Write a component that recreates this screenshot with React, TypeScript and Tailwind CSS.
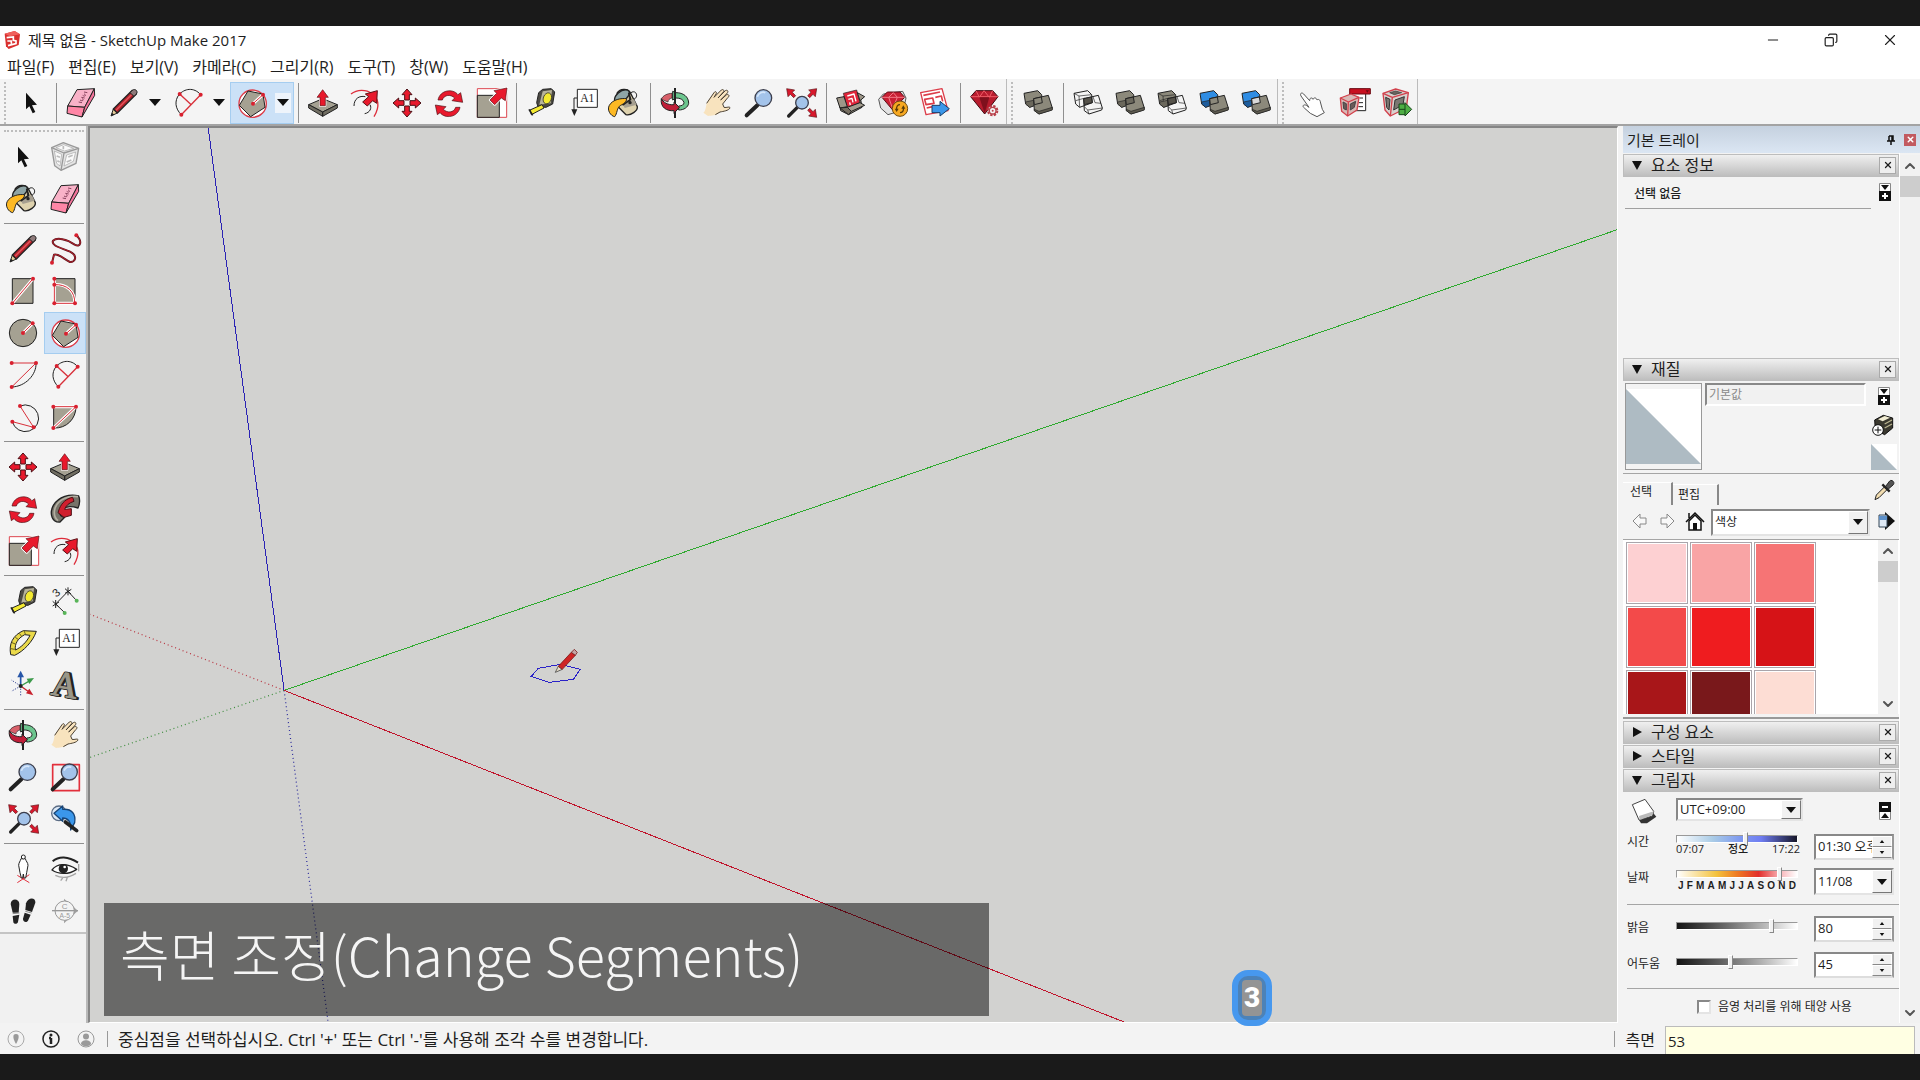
import type { ReactNode } from 'react'
import { ChevronDown, ChevronUp, Copy, Minus, X } from 'lucide-react'

const RED = '#e8192c'
const CLAY = '#a5a192'
const STONE = '#8c897b'
const BLUE = '#2f8de4'
const INK = '#222222'

function Icon({ children }: { children: ReactNode }) {
  return (
    <svg viewBox="0 0 90 90" className="size-[30px] overflow-visible" fill="none" strokeLinejoin="round" aria-hidden="true">
      {children}
    </svg>
  )
}

function Dots({ at }: { at: number[][] }) {
  return (
    <>
      {at.map(([x, y]) => (
        <circle key={`${x}-${y}`} cx={x} cy={y} r="6" fill="#d8202f" />
      ))}
    </>
  )
}

// Red stroke with a white halo
function Halo({ d }: { d: string }) {
  return (
    <>
      <path d={d} stroke="#fff" strokeWidth="9" />
      <path d={d} stroke="#d8303a" strokeWidth="3" />
    </>
  )
}

function SelectIcon() {
  return (
    <Icon>
      <path d="M30 14V64L40 55L50 76L58 72L48 52L63 50Z" fill="#111" />
    </Icon>
  )
}

function ComponentIcon() {
  return (
    <Icon>
      <path d="M5 17L40 2L86 19L78 64L33 85L14 71Z" fill="#e4e4e4" stroke="#999" strokeWidth="4" />
      <path d="M5 17L42 33L86 19M42 33L33 85" stroke="#999" strokeWidth="4" />
      <path d="M13 27L35 37L30 72L20 64ZM50 39L77 30L70 58L42 72ZM18 17L41 8L71 19L43 27Z" fill="#fafafa" stroke="#a5a5a5" strokeWidth="2" />
      <path d="M55 45L68 40M50 60L64 54M20 42L30 46M22 56L29 60M40 12V22" stroke="#bbb" strokeWidth="5" />
    </Icon>
  )
}

function PaintIcon() {
  return (
    <Icon>
      <path d="M22 14C30 2 52 0 60 12L82 56C84 68 62 84 48 80L14 46Z" fill="#ded2ae" stroke={INK} strokeWidth="4" />
      <path d="M34 40L72 34L80 50L44 60Z" fill="#a69f90" />
      <path d="M14 40C10 22 34 2 52 6C66 12 54 32 38 38C30 42 18 46 14 40Z" fill="#8fa5a6" stroke={INK} strokeWidth="4" />
      <path d="M56 14L62 34L40 50L30 44" stroke={INK} strokeWidth="5" />
      <path d="M50 32C34 30 8 34 -2 52C-10 66 2 84 14 86C22 78 20 58 32 52C40 48 50 42 50 32Z" fill="#fdb924" stroke={INK} strokeWidth="3" />
      <path d="M60 42C54 22 62 8 74 12C84 18 80 30 72 34" stroke={INK} strokeWidth="3" />
      <circle cx="60" cy="44" r="5" fill={INK} />
    </Icon>
  )
}

function EraserIcon() {
  return (
    <Icon>
      <path d="M33 5L85 2L56 58L5 54Z" fill="#f9b2c8" stroke={INK} strokeWidth="3" />
      <path d="M5 54L56 58L48 87L3 76Z" fill="#ff86a6" stroke={INK} strokeWidth="3" />
      <path d="M85 2L86 22L48 87L56 58Z" fill="#f4749b" stroke={INK} strokeWidth="3" />
      <path d="M38 42L48 44M42 36C50 42 56 34 48 32M46 28L56 30M50 22C58 28 62 20 54 18M54 12L64 14" stroke="#8b4560" strokeWidth="3" />
    </Icon>
  )
}

function PencilIcon() {
  return (
    <Icon>
      <path d="M6 84L13 63L25 75Z" fill="#e6cf9b" stroke={INK} strokeWidth="3" />
      <path d="M6 84L9 74L16 80Z" fill={INK} />
      <path d="M13 63L70 7L82 18L25 75Z" fill="#b3202a" stroke={INK} strokeWidth="4" />
      <path d="M21 67L72 16" stroke="#e4565c" strokeWidth="4" />
      <path d="M63 14L70 7C78 0 89 10 82 18L75 25Z" fill="#8e7a7a" stroke={INK} strokeWidth="3" />
    </Icon>
  )
}

function FreehandIcon() {
  const d = 'M79 4C98 22 92 42 74 32C50 14 20 10 9 20C2 36 36 42 60 53C86 66 74 86 60 84C40 74 26 58 12 62L6 86'
  return (
    <Icon>
      <path d={d} stroke="#5e161d" strokeWidth="6" />
      <path d={d} stroke="#b3222e" strokeWidth="3" />
      <Dots at={[[79, 4], [6, 86]]} />
    </Icon>
  )
}

function RectangleIcon() {
  return (
    <Icon>
      <path d="M13 8H75V82H13Z" fill={CLAY} stroke={INK} strokeWidth="3" />
      <Halo d="M13 82L75 8" />
      <Dots at={[[13, 82], [75, 8]]} />
    </Icon>
  )
}

function RotatedRectangleIcon() {
  return (
    <Icon>
      <path d="M13 8H75V82H13Z" fill={CLAY} stroke={INK} strokeWidth="3" />
      <Halo d="M13 8V82H75" />
      <Halo d="M13 26C50 24 76 46 74 82" />
      <Dots at={[[13, 8], [13, 26], [13, 82], [75, 82]]} />
    </Icon>
  )
}

function CircleIcon() {
  return (
    <Icon>
      <circle cx="45" cy="45" r="41" fill={CLAY} stroke={INK} strokeWidth="3" />
      <Halo d="M45 45L74 16" />
      <Dots at={[[45, 45], [74, 16]]} />
    </Icon>
  )
}

function PolygonIcon() {
  return (
    <Icon>
      <circle cx="47" cy="47" r="41" fill="#fff" stroke="#dd3c48" strokeWidth="4" />
      <path d="M33 9L78 18L84 58L41 86L7 52Z" fill={CLAY} stroke={INK} strokeWidth="3" />
      <Halo d="M48 47L78 20" />
      <Dots at={[[48, 47], [78, 20]]} />
    </Icon>
  )
}

function ArcIcon() {
  return (
    <Icon>
      <path d="M84 9C86 44 52 80 11 81" stroke={INK} strokeWidth="3" />
      <path d="M11 9H84L11 81" stroke="#d8303a" strokeWidth="3" />
      <Dots at={[[11, 9], [84, 9], [11, 81]]} />
    </Icon>
  )
}

function TwoPointArcIcon() {
  return (
    <Icon>
      <path d="M83 20C62 -4 34 2 18 20C4 38 6 62 25 80" stroke={INK} strokeWidth="3" />
      <path d="M20 18L53 49M83 20L25 80" stroke="#d8303a" strokeWidth="4" />
      <Dots at={[[20, 18], [83, 20], [25, 80]]} />
    </Icon>
  )
}

function ThreePointArcIcon() {
  return (
    <Icon>
      <path d="M36 12A40 40 0 1 1 13 59" stroke={INK} strokeWidth="3" />
      <path d="M36 12L77 76L13 59" stroke="#d8303a" strokeWidth="3" />
      <Dots at={[[36, 12], [77, 76], [13, 59]]} />
    </Icon>
  )
}

function PieIcon() {
  return (
    <Icon>
      <path d="M11 14H78C78 50 50 80 11 78Z" fill={CLAY} stroke={INK} strokeWidth="3" />
      <Halo d="M10 14H78L10 78" />
      <Dots at={[[10, 14], [78, 14], [10, 78]]} />
    </Icon>
  )
}

function MoveIcon() {
  return (
    <Icon>
      {['rotate(0 45 45)', 'rotate(90 45 45)', 'rotate(180 45 45)', 'rotate(270 45 45)'].map((turn) => (
        <path key={turn} transform={turn} d="M45 3L60 20H52V36H38V20H30Z" fill={RED} stroke="#4a1015" strokeWidth="3" />
      ))}
    </Icon>
  )
}

function PushPullIcon() {
  return (
    <Icon>
      <path d="M2 50L44 32L88 50L44 72Z" fill={CLAY} stroke={INK} strokeWidth="3" />
      <path d="M2 50V60L44 85V72ZM88 50V60L44 85V72Z" fill="#716e62" stroke={INK} strokeWidth="3" />
      <path d="M44 5L61 28H52V53H36V28H27Z" fill={RED} stroke="#fff" strokeWidth="6" paintOrder="stroke" />
      <path d="M44 5L61 28H52V53H36V28H27Z" stroke="#5a1015" strokeWidth="2" />
    </Icon>
  )
}

function RotateIcon() {
  const d = 'M12 36C18 6 56 0 72 20L80 14L86 43L54 38L62 30C50 18 30 20 25 36Z'
  return (
    <Icon>
      <path d={d} fill={RED} stroke="#4a1015" strokeWidth="2" />
      <path d={d} transform="rotate(180 45 47)" fill={RED} stroke="#4a1015" strokeWidth="2" />
    </Icon>
  )
}

function FollowMeIcon() {
  return (
    <Icon>
      <path d="M86 6C60 -2 26 8 10 34C-4 62 8 86 30 84L44 70C28 68 26 54 36 46C50 34 66 36 84 42C90 30 90 14 86 6Z" fill="#77746a" stroke={INK} strokeWidth="4" />
      <path d="M84 8C56 4 26 16 16 40C10 58 14 72 24 80" stroke="#b3afa2" strokeWidth="5" />
      <path d="M28 44C36 26 48 14 68 10L72 22C58 26 48 34 44 46L64 44V64L42 70L24 56Z" fill="#d01f2e" stroke="#4a1015" strokeWidth="3" />
    </Icon>
  )
}

function ScaleIcon() {
  return (
    <Icon>
      <path d="M4 2H92V88H4Z" fill="#fff" stroke="#dd4650" strokeWidth="3" />
      <path d="M4 22H70V88H4Z" fill={CLAY} stroke={INK} strokeWidth="3" />
      <path d="M93 0L88 38L76 30L56 50L42 36L62 16L54 8Z" fill={RED} stroke="#fff" strokeWidth="7" paintOrder="stroke" />
      <path d="M93 0L88 38L76 30L56 50L42 36L62 16L54 8Z" stroke="#5a1015" strokeWidth="2" />
    </Icon>
  )
}

function OffsetIcon() {
  return (
    <Icon>
      <path d="M3 18C40 -12 112 22 72 86" stroke="#dd2c3a" strokeWidth="4" />
      <path d="M12 54C12 32 28 22 46 26M44 77C60 74 66 60 60 50" stroke={INK} strokeWidth="3" />
      <path d="M82 8L80 46L68 38L52 54L38 42L56 26L46 18Z" fill={RED} stroke="#5a1015" strokeWidth="3" />
    </Icon>
  )
}

function TapeIcon() {
  return (
    <Icon>
      <path d="M50 4L76 2L86 12L80 48L60 58L36 56L32 44L38 14Z" fill="#4c4a44" stroke={INK} strokeWidth="3" />
      <path d="M50 10L78 6L74 46L40 50Z" fill="#b8b49c" />
      <ellipse cx="64" cy="31" rx="12" ry="17" transform="rotate(20 64 31)" fill="#f4ea31" stroke={INK} strokeWidth="2" />
      <path d="M12 66L48 50L54 60L16 80Z" fill="#f4ea31" stroke={INK} strokeWidth="3" />
      <path d="M9 64L20 82" stroke={INK} strokeWidth="5" />
    </Icon>
  )
}

function DimensionIcon() {
  return (
    <Icon>
      <path d="M17 54L54 16L80 44M17 54L44 80M8 46L26 62M17 42V66M8 60L27 48M45 8L63 24M54 4V28M45 22L64 10" stroke={INK} strokeWidth="3" />
      <circle cx="44" cy="81" r="6" fill="#58b558" />
      <circle cx="80" cy="44" r="6" fill="#58b558" />
      <text x="8" y="30" fontSize="34" fontFamily="Liberation Sans" fill={INK} transform="rotate(-40 20 18)">3</text>
    </Icon>
  )
}

function ProtractorIcon() {
  return (
    <Icon>
      <path d="M85 10L46 8C14 22 2 48 8 80L20 82C46 70 74 42 85 10Z" fill="#ead94a" stroke={INK} strokeWidth="3" />
      <path d="M66 22L50 20C28 32 20 48 22 66C40 58 56 42 66 22Z" fill="#f4f4f4" stroke={INK} strokeWidth="3" />
      <path d="M48 8L52 18M34 16L40 24M22 28L30 34M12 44L22 48M8 62L20 64" stroke="#6c621c" strokeWidth="3" />
    </Icon>
  )
}

function TextIcon() {
  return (
    <Icon>
      <path d="M28 30H18V68" stroke={INK} strokeWidth="3" />
      <path d="M10 64H28L19 84Z" fill={INK} />
      <path d="M28 4H88V58H28Z" fill="#fff" stroke={INK} strokeWidth="3" />
      <text x="58" y="42" textAnchor="middle" fontSize="35" fontFamily="Liberation Serif" fill={INK}>A1</text>
    </Icon>
  )
}

function AxesIcon() {
  return (
    <Icon>
      <path d="M38 48V80M38 48L10 64M38 48L10 30" stroke="#44539d" strokeWidth="3" strokeDasharray="4 4" />
      <path d="M38 48V18" stroke="#2756a8" strokeWidth="5" />
      <path d="M28 22L38 2L48 22Z" fill="#2756a8" />
      <path d="M38 48L62 34" stroke="#3c9a4a" strokeWidth="4" />
      <path d="M56 26L78 24L64 42Z" fill="#3c9a4a" />
      <path d="M38 48L60 64" stroke="#c8202c" strokeWidth="4" />
      <path d="M64 56L76 76L54 70Z" fill="#c8202c" />
      <circle cx="38" cy="48" r="6" fill={INK} />
    </Icon>
  )
}

function Text3dIcon() {
  return (
    <Icon>
      <g fontSize="108" fontFamily="Liberation Serif" transform="rotate(10 45 45)">
        <text x="12" y="80" fill="#77746a" stroke={INK} strokeWidth="7">A</text>
        <text x="6" y="80" fill="#9a9789" stroke={INK} strokeWidth="8">A</text>
        <text x="6" y="80" fill="#9a9789" stroke="#9a9789" strokeWidth="3">A</text>
      </g>
    </Icon>
  )
}

function OrbitIcon() {
  return (
    <Icon>
      <path d="M48 14C70 14 86 26 86 46C84 58 72 66 56 66V54C66 54 72 50 72 44C70 34 60 30 48 30L38 36V10Z" fill="#6cc58e" stroke={INK} strokeWidth="3" />
      <path d="M4 34C8 22 24 16 36 16V30C28 32 24 36 24 42Z" fill="#d8606a" stroke={INK} strokeWidth="2" />
      <path d="M45 0V90" stroke={INK} strokeWidth="6" />
      <path d="M4 32C8 42 24 52 42 50V42L58 58L42 76V68C20 70 0 58 4 32Z" fill="#bf1e38" stroke={INK} strokeWidth="3" />
    </Icon>
  )
}

function PanIcon() {
  return (
    <Icon>
      <path d="M4 74C14 66 10 50 18 38L36 14C40 8 46 12 42 18L36 28L58 6C64 2 68 8 64 12L48 30L70 8C76 4 80 10 76 15L56 36L74 20C80 18 84 24 78 28L62 48L66 58C74 60 84 54 84 60C80 68 64 70 54 72C44 84 26 82 18 84Z" fill="#f8e3be" />
      <path d="M14 46L36 14C40 8 46 12 42 18L36 28L58 6C64 2 68 8 64 12L48 30L70 8C76 4 80 10 76 15L56 36L74 20C80 18 84 24 78 28L62 48L66 58C74 60 84 54 84 60C80 68 64 70 54 72L40 80" stroke="#4b4133" strokeWidth="3" />
    </Icon>
  )
}

function ZoomIcon() {
  return (
    <Icon>
      <path d="M40 52L8 82" stroke={INK} strokeWidth="12" strokeLinecap="round" />
      <circle cx="58" cy="30" r="25" fill="#a3c3ea" stroke="#3c3e4c" strokeWidth="4" />
      <path d="M40 26C44 14 56 10 64 14" stroke="#d5e6fa" strokeWidth="5" />
    </Icon>
  )
}

function ZoomWindowIcon() {
  return (
    <Icon>
      <path d="M8 8H88V86H8Z" stroke="#e2303c" strokeWidth="5" />
      <path d="M40 52L8 82" stroke={INK} strokeWidth="12" strokeLinecap="round" />
      <circle cx="58" cy="30" r="24" fill="#a3c3ea" stroke="#3c3e4c" strokeWidth="4" />
      <path d="M42 26C46 16 56 12 64 16" stroke="#d5e6fa" strokeWidth="5" />
    </Icon>
  )
}

function ZoomExtentsIcon() {
  return (
    <Icon>
      <path d="M34 58L8 84" stroke={INK} strokeWidth="10" strokeLinecap="round" />
      <circle cx="48" cy="44" r="19" fill="#a3c3ea" stroke="#3c3e4c" strokeWidth="4" />
      <path d="M2 2L26 6L19 13L29 23L23 29L13 19L6 26Z" fill="#d8182c" stroke="#5a1015" strokeWidth="2" />
      <path d="M92 2L68 6L75 13L65 23L71 29L81 19L88 26Z" fill="#d8182c" stroke="#5a1015" strokeWidth="2" />
      <path d="M92 88L68 84L75 77L65 67L71 61L81 71L88 64Z" fill="#d8182c" stroke="#5a1015" strokeWidth="2" />
    </Icon>
  )
}

function PreviousIcon() {
  return (
    <Icon>
      <circle cx="27" cy="28" r="22" fill="#dbe8f6" stroke="#5b6c84" strokeWidth="4" />
      <path d="M12 28L38 6V16C66 14 78 30 74 56L62 78C64 54 54 42 38 42V52Z" fill="#3b97ea" stroke="#174577" strokeWidth="4" />
      <path d="M46 54L80 80" stroke={INK} strokeWidth="11" strokeLinecap="round" />
    </Icon>
  )
}

function PositionCameraIcon() {
  return (
    <Icon>
      <path d="M28 86L64 62M28 64L64 86M46 60V76" stroke="#e2303c" strokeWidth="3" />
      <path d="M39 14C37 22 32 26 32 34L36 56L40 72H44L46 60L48 72H53L56 56L60 34C60 26 54 22 52 14Z" fill="#fff" stroke={INK} strokeWidth="3" />
      <circle cx="46" cy="9" r="6" fill="#fff" stroke={INK} strokeWidth="3" />
    </Icon>
  )
}

function LookAroundIcon() {
  return (
    <Icon>
      <path d="M8 22C26 6 54 6 84 26" stroke={INK} strokeWidth="6" />
      <path d="M6 48C22 26 54 28 80 46C54 64 24 60 6 48Z" fill="#fff" stroke={INK} strokeWidth="4" />
      <circle cx="40" cy="44" r="14" fill={INK} />
      <circle cx="44" cy="39" r="4" fill="#fff" />
      <path d="M16 64C36 74 56 72 78 58M32 80L38 72M48 82L52 70M86 30V52" stroke="#a5a5a5" strokeWidth="4" />
    </Icon>
  )
}

function WalkIcon() {
  return (
    <Icon>
      <path d="M8 24C8 6 34 6 34 24L32 50H14Z" fill={INK} />
      <path d="M14 60L34 56L30 78C28 86 16 84 16 78Z" fill={INK} />
      <path d="M54 22C60 2 84 4 82 20L72 48L52 42Z" fill={INK} />
      <path d="M50 50L68 56L60 74C54 82 44 76 45 68Z" fill={INK} />
      <path d="M14 53L34 51M52 46L71 51" stroke="#888" strokeWidth="3" />
    </Icon>
  )
}

function SectionIcon() {
  return (
    <Icon>
      <path d="M42 8L84 44L42 82Z" fill="#a3a3a3" />
      <circle cx="44" cy="44" r="29" fill="#f4f4f4" stroke="#999" strokeWidth="3" />
      <path d="M6 44H84" stroke="#999" strokeWidth="4" />
      <text x="44" y="38" textAnchor="middle" fontSize="24" fontFamily="Liberation Sans" fill="#999">C</text>
      <text x="44" y="65" textAnchor="middle" fontSize="20" fontFamily="Liberation Sans" fill="#999">A-5</text>
    </Icon>
  )
}

function WarehouseIcon() {
  return (
    <Icon>
      <path d="M8 38L24 26L74 34L78 58L38 80L14 68Z" fill="#8d8678" stroke={INK} strokeWidth="3" />
      <path d="M22 16L62 6L72 44L34 60Z" fill="#e1253a" stroke={INK} strokeWidth="2" />
      <path d="M34 24L54 18L60 40M37 34L48 31L51 43M41 43L43 51" stroke="#fff" strokeWidth="4" />
      <path d="M64 14L86 26L72 38Z" fill="#9d9688" stroke={INK} strokeWidth="3" />
      <path d="M2 30L24 26L34 56L12 60Z" fill="#9d9688" stroke={INK} strokeWidth="3" />
      <path d="M34 58L72 44L86 52L46 70Z" fill="#a49d8f" stroke={INK} strokeWidth="3" />
      <path d="M12 60L34 58L46 70L38 80Z" fill="#776f62" stroke={INK} strokeWidth="3" />
    </Icon>
  )
}

function ExtensionWarehouseIcon() {
  return (
    <Icon>
      <path d="M2 34L16 18L74 10L84 30L76 66L30 80L8 60Z" fill="#e2e2e2" stroke="#555" strokeWidth="3" />
      <path d="M12 28L28 12H66L80 28L44 66Z" fill="#c91f33" stroke="#5c0f18" strokeWidth="3" />
      <path d="M12 28H80M32 28L44 62L58 28L46 14Z" stroke="#f17a86" strokeWidth="3" />
      <circle cx="66" cy="62" r="23" fill="#f6a821" stroke="#6b4a12" strokeWidth="3" />
      <path d="M56 66C54 54 60 50 66 50M76 58C78 70 72 74 66 74" stroke="#5a3c0a" strokeWidth="4" />
      <path d="M50 62H62L56 72ZM82 62H70L76 52Z" fill="#5a3c0a" />
    </Icon>
  )
}

function LayoutIcon() {
  return (
    <Icon>
      <path d="M2 14L66 2L84 68L18 80Z" fill="#fff" stroke="#dc3c48" strokeWidth="4" />
      <path d="M10 22L60 12M14 34L38 30L42 46L18 50ZM20 60L38 56M46 28L64 24L68 40" stroke="#dc3c48" strokeWidth="5" />
      <path d="M36 52H60V40L88 62L60 84V74H36Z" fill="#3b97ea" stroke="#1a3d66" strokeWidth="3" />
    </Icon>
  )
}

function ExtensionManagerIcon() {
  return (
    <Icon>
      <path d="M2 26L18 8H68L84 26L44 78Z" fill="#b81c2e" stroke="#3f0a11" strokeWidth="3" />
      <path d="M18 8L28 28L42 8L58 28L68 8M2 26H84" stroke="#ee5d68" strokeWidth="3" />
      <path d="M28 28H58L44 76Z" fill="#7f101d" />
      <circle cx="68" cy="68" r="14" fill="#f4f4f4" stroke="#b8404a" strokeWidth="6" strokeDasharray="7 4" />
      <circle cx="68" cy="68" r="10" fill="#f4f4f4" stroke="#b8404a" strokeWidth="4" />
      <circle cx="68" cy="68" r="3" fill="#b8404a" />
    </Icon>
  )
}

type SolidProps = { first: string; second: string; overlap: string; wire?: boolean }

function SolidIcon({ first, second, overlap, wire }: SolidProps) {
  return (
    <Icon>
      <path d="M3 16L44 8L56 20L58 44L20 58L8 48Z" fill={first} stroke={INK} strokeWidth="3" />
      {wire && <path d="M3 16L18 24L56 20M18 24L20 58M8 38L36 30" stroke={INK} strokeWidth="2" />}
      {first !== 'none' && (
        <path d="M8 42L36 36V52L20 58L8 48Z" fill={first === BLUE ? '#1d5c9c' : '#6b685c'} stroke={INK} strokeWidth="2" />
      )}
      <path d="M32 32L76 22L88 60L86 66L48 78L34 68Z" fill={second} stroke={INK} strokeWidth="3" />
      {second !== 'none' && <path d="M34 64L48 70L88 58V66L48 78L34 68Z" fill="#5e5b50" stroke={INK} strokeWidth="2" />}
      {wire && <path d="M34 56L44 66L88 60M44 66L48 78M60 26L66 44L84 46" stroke={INK} strokeWidth="2" />}
      <path d="M32 32L55 27L58 44L34 50Z" fill={overlap} stroke={INK} strokeWidth="3" />
    </Icon>
  )
}

function InteractIcon() {
  return (
    <Icon>
      <path d="M40 76L22 60C14 54 20 48 28 52L36 58L12 24C8 16 14 12 20 18L38 38C38 28 46 28 48 34C50 28 58 28 60 36C64 32 70 36 70 42L76 64L82 74L60 86Z" fill="#fff" stroke="#555" strokeWidth="3" />
    </Icon>
  )
}

function DynamicCube() {
  return (
    <g stroke="#d2414c" strokeWidth="4">
      <path d="M4 30L36 18L60 28L54 66L26 84L8 70Z" fill="#d9b9b6" />
      <path d="M4 30L28 42L60 28M28 42L26 84" />
      <path d="M34 48L50 40L46 58L34 66Z M12 42L22 47V66L14 62Z" fill="#6a5a58" stroke="#444" strokeWidth="3" />
    </g>
  )
}

function ComponentOptionsIcon() {
  return (
    <Icon>
      <path d="M34 4H80V68H44" fill="#fff" stroke={INK} strokeWidth="3" />
      <path d="M62 30H72M60 44H72M58 56H72" stroke={INK} strokeWidth="3" />
      <path d="M32 2H94V18H32Z" fill="#c8101f" stroke="#6d0a13" strokeWidth="3" />
      <path d="M80 7H90L85 14Z" fill="#6d0a13" />
      <DynamicCube />
    </Icon>
  )
}

function ComponentAttributesIcon() {
  return (
    <Icon>
      <path d="M6 16L44 3L82 14L76 60L28 84L12 66Z" fill="#d8d2cf" stroke="#d2414c" strokeWidth="4" />
      <path d="M6 16L34 28L82 14M34 28L28 84" stroke="#d2414c" strokeWidth="4" />
      <path d="M42 36L70 26L66 50L38 66ZM14 28L27 34L24 66L17 58Z" fill="#7b7771" stroke="#333" strokeWidth="3" />
      <path d="M26 14L44 9L62 14L40 20Z" fill="#6a655f" stroke="#333" strokeWidth="2" />
      <path d="M54 48H72V44L92 64L72 84V80H54Z" fill="#4fae45" stroke="#17481a" strokeWidth="3" />
      <path d="M54 64H72M72 48V80" stroke="#17481a" strokeWidth="3" />
    </Icon>
  )
}

function Tool({ label, active, children }: { label: string; active?: boolean; children: ReactNode }) {
  return (
    <button
      type="button"
      aria-label={label}
      className={
        active
          ? 'flex h-[42px] w-[42px] shrink-0 items-center justify-center border border-[#a5cdf0] bg-[#cbe1f7]'
          : 'flex h-[42px] w-[42px] shrink-0 items-center justify-center'
      }
    >
      {children}
    </button>
  )
}

function SplitTool({ label, active, children }: { label: string; active?: boolean; children: ReactNode }) {
  return (
    <div
      className={
        active
          ? 'flex h-[42px] w-16 shrink-0 border border-[#a5cdf0] bg-[#cbe1f7]'
          : 'flex h-[42px] w-16 shrink-0 border border-transparent'
      }
    >
      <button type="button" aria-label={label} className="flex flex-1 items-center justify-center">
        {children}
      </button>
      <button type="button" aria-label={`${label} 메뉴`} className="flex w-5 items-center justify-center">
        <span className={active ? 'flex h-5 w-4 items-center justify-center bg-[#eef4fb]' : 'flex h-5 w-4 items-center justify-center'}>
          <svg viewBox="0 0 12 8" className="h-2 w-3 shrink-0">
            <path d="M0 0H12L6 7Z" fill="#111" />
          </svg>
        </span>
      </button>
    </div>
  )
}

function Separator() {
  return (
    <div className="flex h-10 w-2 shrink-0 justify-center">
      <div className="w-px bg-[#8f8f8f]" />
    </div>
  )
}

function Grip() {
  return <div className="mx-1 h-[42px] shrink-0 border-l-2 border-dotted border-[#bdbdbd]" />
}

function Palette({ children }: { children: ReactNode }) {
  return <div className="grid grid-cols-2">{children}</div>
}

function PaletteRule() {
  return (
    <div className="flex h-2 px-0.5 pt-[3px]">
      <div className="h-px flex-1 bg-[#8f8f8f]" />
    </div>
  )
}

function TitleBar() {
  return (
    <header className="flex h-7 items-center bg-white pl-1">
      <svg viewBox="0 0 48 54" className="mr-2 h-[18px] w-4" aria-hidden="true">
        <path d="M2 8L32 0L48 10L44 42L14 54L6 46Z" fill="#d9302f" />
        <path d="M2 8L32 0L48 10L18 16Z" fill="#f0605c" />
        <path d="M8 20L28 18V28L36 30V38L12 44M10 30L22 30V38" fill="none" stroke="#fff" strokeWidth="5" />
      </svg>
      <h1 className="text-[15px] leading-5">제목 없음 - SketchUp Make 2017</h1>
      <div className="ml-auto flex items-center">
        <button type="button" aria-label="최소화" className="flex w-[58px] justify-center">
          <Minus className="size-4" strokeWidth={1.5} />
        </button>
        <button type="button" aria-label="이전 크기로" className="flex w-[58px] justify-center">
          <Copy className="size-[14px] -scale-x-100" strokeWidth={2} />
        </button>
        <button type="button" aria-label="닫기" className="flex w-[60px] justify-center">
          <X className="size-[18px]" strokeWidth={1.5} />
        </button>
      </div>
    </header>
  )
}

const menus = ['파일(F)', '편집(E)', '보기(V)', '카메라(C)', '그리기(R)', '도구(T)', '창(W)', '도움말(H)']

function MenuBar() {
  return (
    <nav className="flex h-[25px] items-center gap-3.5 bg-white pl-[7px]">
      {menus.map((menu) => (
        <button key={menu} type="button" className="text-[16px] leading-5">
          {menu}
        </button>
      ))}
    </nav>
  )
}

function TopToolbar() {
  return (
    <div className="flex h-[47px] items-center overflow-hidden border-b-2 border-[#a3a3a3] bg-[#f4f4f4]">
      <div className="flex h-full items-center border-r border-[#bbb] pt-[3px]">
        <Grip />
        <Tool label="선택"><SelectIcon /></Tool>
        <Separator />
        <Tool label="지우개"><EraserIcon /></Tool>
        <SplitTool label="선"><PencilIcon /></SplitTool>
        <SplitTool label="호"><TwoPointArcIcon /></SplitTool>
        <SplitTool label="다각형" active><PolygonIcon /></SplitTool>
        <Separator />
        <Tool label="밀기/끌기"><PushPullIcon /></Tool>
        <Tool label="오프셋"><OffsetIcon /></Tool>
        <Tool label="이동"><MoveIcon /></Tool>
        <Tool label="회전"><RotateIcon /></Tool>
        <Tool label="배율"><ScaleIcon /></Tool>
        <Separator />
        <Tool label="줄자"><TapeIcon /></Tool>
        <Tool label="텍스트"><TextIcon /></Tool>
        <Tool label="페인트통"><PaintIcon /></Tool>
        <Separator />
        <Tool label="궤도"><OrbitIcon /></Tool>
        <Tool label="이동 보기"><PanIcon /></Tool>
        <Tool label="확대/축소"><ZoomIcon /></Tool>
        <Tool label="범위 확대"><ZoomExtentsIcon /></Tool>
        <Separator />
        <Tool label="3D Warehouse"><WarehouseIcon /></Tool>
        <Tool label="Extension Warehouse"><ExtensionWarehouseIcon /></Tool>
        <Tool label="LayOut"><LayoutIcon /></Tool>
        <Separator />
        <Tool label="확장 프로그램 관리자"><ExtensionManagerIcon /></Tool>
      </div>
      <div className="flex h-full items-center border-r border-[#bbb] pt-[3px]">
        <Grip />
        <Tool label="외부 셸"><SolidIcon first={STONE} second={STONE} overlap={STONE} /></Tool>
        <Separator />
        <Tool label="교차"><SolidIcon first="none" second="none" overlap="#55524a" wire /></Tool>
        <Tool label="결합"><SolidIcon first={STONE} second={STONE} overlap="#6b685d" /></Tool>
        <Tool label="빼기"><SolidIcon first={STONE} second="none" overlap="#55524a" wire /></Tool>
        <Tool label="자르기"><SolidIcon first={BLUE} second={STONE} overlap={STONE} /></Tool>
        <Tool label="분할"><SolidIcon first={BLUE} second={STONE} overlap="#d9d9d9" /></Tool>
      </div>
      <div className="flex h-full items-center border-r border-[#bbb] pt-[3px]">
        <Grip />
        <div className="flex pl-[3px]">
          <Tool label="상호 작용"><InteractIcon /></Tool>
          <Tool label="구성 요소 옵션"><ComponentOptionsIcon /></Tool>
          <Tool label="구성 요소 특성"><ComponentAttributesIcon /></Tool>
        </div>
      </div>
    </div>
  )
}

function LeftToolbar() {
  return (
    <aside className="w-[88px] shrink-0 border-r-2 border-[#b9b9b9] bg-[#f1f1f1]">
      <div className="border-b-2 border-[#c4c4c4] bg-[#f4f4f4] pl-0.5">
        <div className="flex h-[10px] items-center px-0.5">
          <div className="flex-1 border-t-2 border-dotted border-[#bdbdbd]" />
        </div>
        <Palette>
          <Tool label="선택 도구"><SelectIcon /></Tool>
          <Tool label="구성 요소 만들기"><ComponentIcon /></Tool>
          <Tool label="페인트통 도구"><PaintIcon /></Tool>
          <Tool label="지우개 도구"><EraserIcon /></Tool>
        </Palette>
        <PaletteRule />
        <Palette>
          <Tool label="선 도구"><PencilIcon /></Tool>
          <Tool label="자유선"><FreehandIcon /></Tool>
          <Tool label="사각형"><RectangleIcon /></Tool>
          <Tool label="회전된 사각형"><RotatedRectangleIcon /></Tool>
          <Tool label="원"><CircleIcon /></Tool>
          <Tool label="다각형 도구" active><PolygonIcon /></Tool>
          <Tool label="호 도구"><ArcIcon /></Tool>
          <Tool label="2점 호"><TwoPointArcIcon /></Tool>
          <Tool label="3점 호"><ThreePointArcIcon /></Tool>
          <Tool label="파이"><PieIcon /></Tool>
        </Palette>
        <PaletteRule />
        <Palette>
          <Tool label="이동 도구"><MoveIcon /></Tool>
          <Tool label="밀기/끌기 도구"><PushPullIcon /></Tool>
          <Tool label="회전 도구"><RotateIcon /></Tool>
          <Tool label="따라가기"><FollowMeIcon /></Tool>
          <Tool label="배율 도구"><ScaleIcon /></Tool>
          <Tool label="오프셋 도구"><OffsetIcon /></Tool>
        </Palette>
        <PaletteRule />
        <Palette>
          <Tool label="줄자 도구"><TapeIcon /></Tool>
          <Tool label="치수"><DimensionIcon /></Tool>
          <Tool label="각도기"><ProtractorIcon /></Tool>
          <Tool label="텍스트 도구"><TextIcon /></Tool>
          <Tool label="축"><AxesIcon /></Tool>
          <Tool label="3D 텍스트"><Text3dIcon /></Tool>
        </Palette>
        <PaletteRule />
        <Palette>
          <Tool label="궤도 도구"><OrbitIcon /></Tool>
          <Tool label="화면 이동"><PanIcon /></Tool>
          <Tool label="확대/축소 도구"><ZoomIcon /></Tool>
          <Tool label="창 확대"><ZoomWindowIcon /></Tool>
          <Tool label="범위 확대 도구"><ZoomExtentsIcon /></Tool>
          <Tool label="이전"><PreviousIcon /></Tool>
        </Palette>
        <PaletteRule />
        <Palette>
          <Tool label="카메라 배치"><PositionCameraIcon /></Tool>
          <Tool label="둘러보기"><LookAroundIcon /></Tool>
          <Tool label="보행 시선"><WalkIcon /></Tool>
          <Tool label="단면"><SectionIcon /></Tool>
        </Palette>
      </div>
    </aside>
  )
}

function Viewport() {
  return (
    <main className="relative min-w-0 flex-1 border-t-2 border-l-2 border-r border-b border-t-[#858585] border-r-white border-b-white border-l-[#858585] bg-[#d2d2d0]">
      <svg viewBox="90 128 1526 894" preserveAspectRatio="xMinYMin slice" className="absolute inset-0 size-full" fill="none" aria-label="모델">
        <g strokeDasharray="1 3" strokeWidth="1.2">
          <path d="M284 690L90 614" stroke="#b8323e" />
          <path d="M284 690L90 757" stroke="#3c8c3c" />
          <path d="M284 690L328 1022" stroke="#2a2a9c" />
        </g>
        <g strokeWidth="1" shapeRendering="crispEdges">
          <path d="M284 690L208 127" stroke="#2a22b4" />
          <path d="M284 690L1618 229" stroke="#2faa2f" />
          <path d="M284 690L1125 1022" stroke="#c0142c" />
          <path d="M531 676L538 668L560 664L580 669L573 679L549 682Z" stroke="#2a22c8" />
        </g>
        <path d="M555 672L558 666L562 669Z" fill="#eadfc8" stroke="#444" strokeWidth="0.8" />
        <path d="M558 666L571 652L575 655L562 669Z" fill="#cf2424" stroke="#7a1a1a" strokeWidth="0.8" />
        <path d="M571 652L574 649L577 652L575 655Z" fill="#c2a5a5" stroke="#7a1a1a" strokeWidth="0.8" />
      </svg>
      <div className="absolute bottom-1.5 left-3.5 flex h-[113px] w-[885px] items-center bg-black/50 px-4 pb-3">
        <p className="font-['Noto_Sans_CJK_KR',sans-serif] text-[54px] leading-none font-light whitespace-nowrap text-[#f5f5f5]">측면 조정(Change Segments)</p>
      </div>
      <kbd className="absolute -bottom-1 left-[1142px] z-10 flex h-14 w-10 items-center justify-center rounded-2xl border-[6px] border-[#4798ee] bg-[#4c82b8] p-1 font-['Roboto'] text-[28px] font-black text-white">
        <span className="flex size-full items-center justify-center rounded bg-[#949494]">3</span>
      </kbd>
    </main>
  )
}

function PanelHeader({ title, open }: { title: string; open?: boolean }) {
  return (
    <div className="flex h-[23px] items-center border border-[#bdbdbd] bg-linear-to-b from-[#f0f0f0] to-[#bebebe] pr-0.5 pb-px pl-2">
      <button type="button" aria-expanded={open ?? false} className="flex flex-1 items-center gap-[9px] text-left">
        <svg viewBox="0 0 10 10" className="size-[10px]" aria-hidden="true">
          <path d={open ? 'M0 1H10L5 10Z' : 'M1 0L10 5L1 10Z'} fill="#111" />
        </svg>
        <span className="text-[16px] leading-5">{title}</span>
      </button>
      <button type="button" aria-label={`${title} 닫기`} className="flex size-[17px] items-center justify-center border border-[#aaa] bg-[#eee]">
        <X className="size-[10px]" strokeWidth={3} />
      </button>
    </div>
  )
}

function DetailToggle({ collapse }: { collapse?: boolean }) {
  return (
    <button type="button" aria-label="세부 정보" className="h-[18px] w-3 shrink-0">
      <svg viewBox="0 0 12 18" className={collapse ? 'size-full rotate-180' : 'size-full'}>
        <path d="M0.5 0.5H11.5V9H0.5Z" fill="#fff" stroke="#888" />
        <path d="M2 2H10L6 7Z" fill="#111" />
        <path d="M0 8H12V18H0Z" fill="#111" />
        <path d={collapse ? 'M3 13H9' : 'M3 13H9M6 10V16'} stroke="#fff" strokeWidth="2" />
      </svg>
    </button>
  )
}

function ScrollBar() {
  return (
    <div className="flex w-5 shrink-0 flex-col items-center bg-[#f1f1f1]">
      <button type="button" aria-label="위로" className="flex h-[21px] items-center">
        <ChevronUp className="size-4 text-[#555]" strokeWidth={3} />
      </button>
      <div className="h-[21px] w-full bg-[#cdcdcd]" />
      <button type="button" aria-label="아래로" className="mt-auto flex h-[21px] items-center">
        <ChevronDown className="size-4 text-[#555]" strokeWidth={3} />
      </button>
    </div>
  )
}

function DropArrow() {
  return (
    <span className="pointer-events-none flex w-5 shrink-0 items-center justify-center border border-t-white border-r-[#777] border-b-[#777] border-l-white bg-[#f1f1f1]">
      <svg viewBox="0 0 10 6" className="h-1.5 w-2.5">
        <path d="M0 0H10L5 6Z" fill="#111" />
      </svg>
    </span>
  )
}

function DropDown({ label, value, className }: { label: string; value: string; className: string }) {
  return (
    <div className={`flex border-2 border-t-[#888] border-r-[#e4e4e4] border-b-[#e4e4e4] border-l-[#888] bg-white ${className}`}>
      <select aria-label={label} className="min-w-0 flex-1 appearance-none bg-white px-0.5 leading-none outline-none">
        <option>{value}</option>
      </select>
      <DropArrow />
    </div>
  )
}

function Spinner({ id, value }: { id: string; value: string }) {
  return (
    <div className="flex h-[26px] w-20 border-2 border-t-[#888] border-r-[#999] border-b-[#ddd] border-l-[#888] bg-white">
      <input id={id} defaultValue={value} className="w-[56px] bg-white pb-0.5 pl-0.5 text-[13px] leading-4 outline-none" />
      <div className="flex flex-1 flex-col">
        <button type="button" aria-label="늘리기" className="flex flex-1 items-center justify-center border border-white border-b-[#888] bg-[#f1f1f1]">
          <svg viewBox="0 0 6 4" className="h-[3px] w-1.5"><path d="M0 4L3 0L6 4Z" fill="#111" /></svg>
        </button>
        <button type="button" aria-label="줄이기" className="flex flex-1 items-center justify-center border border-white border-b-[#888] bg-[#f1f1f1]">
          <svg viewBox="0 0 6 4" className="h-[3px] w-1.5"><path d="M0 0L3 4L6 0Z" fill="#111" /></svg>
        </button>
      </div>
    </div>
  )
}

function Slider({ label, value, className }: { label: string; value: number; className: string }) {
  return (
    <input
      type="range"
      aria-label={label}
      defaultValue={value}
      className={`block h-2 w-[122px] appearance-none border border-t-[#999] border-r-white border-b-white border-l-[#999] [&::-webkit-slider-thumb]:h-[14px] [&::-webkit-slider-thumb]:w-[5px] [&::-webkit-slider-thumb]:appearance-none [&::-webkit-slider-thumb]:border [&::-webkit-slider-thumb]:border-white [&::-webkit-slider-thumb]:border-r-[#888] [&::-webkit-slider-thumb]:border-b-[#888] [&::-webkit-slider-thumb]:bg-[#f1f1f1] ${className}`}
    />
  )
}

const colors = [
  { name: '빨강 1', fill: 'bg-[#fdd0d2]' },
  { name: '빨강 2', fill: 'bg-[#f9a4a5]' },
  { name: '빨강 3', fill: 'bg-[#f67475]' },
  { name: '빨강 4', fill: 'bg-[#f34a4a]' },
  { name: '빨강 5', fill: 'bg-[#ef1c1f]' },
  { name: '빨강 6', fill: 'bg-[#d61317]' },
  { name: '빨강 7', fill: 'bg-[#a81619]' },
  { name: '빨강 8', fill: 'bg-[#79181b]' },
  { name: '주황 1', fill: 'bg-[#fdddd4]' },
]

function EntityInfo() {
  return (
    <section>
      <PanelHeader title="요소 정보" open />
      <div className="flex h-[181px] items-start pt-1.5 pr-2">
        <p className="ml-0.5 flex h-[26px] flex-1 items-center border-b border-[#a0a0a0] pb-1 pl-[9px] text-[12px] font-medium">선택 없음</p>
        <span className="ml-2"><DetailToggle /></span>
      </div>
    </section>
  )
}

function Materials() {
  return (
    <section>
      <PanelHeader title="재질" open />
      <div className="flex h-[93px] gap-[3px] border-b border-[#a5a5a5] pt-0.5 pl-0.5">
        <div className="flex h-[87px] w-[77px] items-center border border-[#999]">
          <svg viewBox="0 0 75 75" className="w-full">
            <path d="M0 0H75V75Z" fill="#fff" />
            <path d="M0 0L75 75H0Z" fill="#aebbc3" />
          </svg>
        </div>
        <input
          aria-label="재질 이름"
          disabled
          defaultValue="기본값"
          className="h-[23px] min-w-0 flex-1 border-2 border-t-[#888] border-r-white border-b-white border-l-[#888] bg-[#f1f1f1] px-0.5 pb-0.5 text-[12px] text-[#8b8b8b]"
        />
        <div className="flex w-[30px] flex-col items-center justify-between pt-1 pb-[3px]">
          <DetailToggle />
          <button type="button" aria-label="재질 만들기" className="h-[22px] w-6 pr-0.5">
            <svg viewBox="0 0 66 66" className="size-full">
              <path d="M8 18L34 4L62 12V42L38 62L10 48Z" fill="#3a382f" stroke="#111" strokeWidth="3" />
              <path d="M18 16L38 6L54 11L32 22Z" fill="#f0ecd2" />
              <path d="M38 30L60 18M38 42L60 30" stroke="#b9b48f" strokeWidth="4" />
              <circle cx="18" cy="48" r="16" fill="#fff" stroke="#111" strokeWidth="3" />
              <path d="M18 38V58M8 48H28" stroke="#111" strokeWidth="3" />
            </svg>
          </button>
          <svg viewBox="0 0 26 26" className="size-[26px] shrink-0">
            <path d="M0 0H26V26Z" fill="#fff" />
            <path d="M0 0L26 26H0Z" fill="#aebbc3" />
          </svg>
        </div>
      </div>
      <div className="flex h-[31px] items-end text-[12px]">
        <button type="button" className="h-[23px] w-[50px] border-t border-r-2 border-t-white border-r-[#888] pr-3 pb-1">선택</button>
        <button type="button" className="h-[21px] w-[46px] border-t border-r-2 border-t-white border-r-[#888] pr-3">편집</button>
        <button type="button" aria-label="샘플 페인트" className="mr-1 mb-1 ml-auto size-[22px]">
          <svg viewBox="0 0 66 66">
            <path d="M6 62L10 48L34 24L42 32L18 56Z" fill="#f2ddb0" stroke="#222" strokeWidth="3" />
            <path d="M28 16L50 38" stroke="#222" strokeWidth="7" />
            <path d="M38 22L50 6C56 0 68 10 60 18L46 30Z" fill="#555" stroke="#222" strokeWidth="3" />
          </svg>
        </button>
      </div>
      <div className="flex h-[35px] items-center border-b border-[#a5a5a5] pr-px pb-0.5 pl-[9px]">
        <button type="button" aria-label="뒤로" className="w-[27px]">
          <svg viewBox="0 0 16 16" className="size-4"><path d="M1 8L8 1V5H14V11H8V15Z" fill="#f8f8f8" stroke="#888" /></svg>
        </button>
        <button type="button" aria-label="앞으로" className="w-[26px]">
          <svg viewBox="0 0 16 16" className="size-4"><path d="M15 8L8 1V5H2V11H8V15Z" fill="#f8f8f8" stroke="#888" /></svg>
        </button>
        <button type="button" aria-label="모델에서" className="w-[26px]">
          <svg viewBox="0 0 20 20" className="size-5">
            <path d="M4 10V19H16V10L10 4Z" fill="#fff" stroke="#111" strokeWidth="1.5" />
            <path d="M1 11L10 2L19 11M4 2V7" fill="none" stroke="#111" strokeWidth="1.5" />
            <path d="M8 12H12V19H8Z" fill="#111" />
          </svg>
        </button>
        <DropDown label="재질 모음" value="색상" className="mt-0.5 h-[27px] flex-1 text-[12px]" />
        <button type="button" aria-label="세부 정보 메뉴" className="ml-2 w-5">
          <svg viewBox="0 0 18 18" className="size-[18px]">
            <path d="M7 0L17 9L7 18Z" fill="#111" />
            <path d="M1 3H9V15H1Z" fill="#dfe9f5" stroke="#345" />
            <path d="M1 4H9V8H1Z" fill="#5d90c9" />
          </svg>
        </button>
      </div>
      <div className="flex h-[174px] bg-white pr-px">
        <div className="grid h-full flex-1 grid-cols-[62px_62px_62px] content-start gap-0.5 overflow-hidden pt-0.5 pl-[3px]">
          {colors.map((color) => (
            <button key={color.name} type="button" aria-label={color.name} className={`size-[62px] border border-[#aaa5ab] shadow-[inset_0_0_0_1px_#fff] ${color.fill}`} />
          ))}
        </div>
        <ScrollBar />
      </div>
    </section>
  )
}

const rowClass = 'flex items-start pl-1'
const labelClass = 'w-[49px] shrink-0 text-[12px] leading-4'

function Shadows() {
  return (
    <section>
      <PanelHeader title="그림자" open />
      <div className="flex h-[42px] items-start pt-1.5 pr-2 pl-2">
        <button type="button" aria-label="그림자 표시" className="w-[45px]">
          <svg viewBox="0 0 78 78" className="size-[26px]">
            <path d="M24 66L64 42L76 56L48 76H30Z" fill="#333" />
            <path d="M4 20L42 4L68 40L64 54L24 66Z" fill="#fff" stroke="#444" strokeWidth="3" />
            <path d="M24 54L68 40L64 52L26 66Z" fill="#bbb" />
          </svg>
        </button>
        <DropDown label="시간대" value="UTC+09:00" className="h-[23px] w-[127px] text-[13px]" />
        <span className="mt-1 ml-auto"><DetailToggle collapse /></span>
      </div>
      <div className={`${rowClass} h-[34px]`}>
        <label htmlFor="time" className={labelClass}>시간</label>
        <div className="w-[138px] pt-px">
          <Slider label="시간 슬라이더" value={57} className="[background-image:linear-gradient(to_right,#fff,#a9cbe6_30%,#7f9bf0_52%,#6f7df2_70%,#151528)]" />
          <div className="flex w-[124px] justify-between text-[11px] leading-3 font-medium">
            <span>07:07</span>
            <span>정오</span>
            <span>17:22</span>
          </div>
        </div>
        <Spinner id="time" value="01:30 오후" />
      </div>
      <div className={`${rowClass} h-[36px]`}>
        <span className={`${labelClass} pt-0.5`}>날짜</span>
        <div className="w-[138px] pt-0.5">
          <Slider label="날짜 슬라이더" value={87} className="[background-image:linear-gradient(to_right,#fff,#f3c23c_33%,#ee7a22_50%,#e22f2c_68%,#f9b4b8_86%,#fff)]" />
          <div className="mt-0.5 flex w-[122px] justify-between px-0.5 font-['Liberation_Sans'] text-[10px] leading-3 font-bold">
            {'JFMAMJJASOND'.split('').map((month, i) => (
              <span key={i}>{month}</span>
            ))}
          </div>
        </div>
        <DropDown label="날짜" value="11/08" className="h-[27px] w-20 text-[13px]" />
      </div>
      <div className="ml-1 h-3 border-t border-[#a5a5a5]" />
      <div className={`${rowClass} h-[36px]`}>
        <label htmlFor="light" className={`${labelClass} pt-1`}>밝음</label>
        <div className="w-[138px] pt-1.5">
          <Slider label="밝음 슬라이더" value={80} className="bg-linear-to-r from-[#151515] to-white" />
        </div>
        <Spinner id="light" value="80" />
      </div>
      <div className={`${rowClass} h-[36px]`}>
        <label htmlFor="dark" className={`${labelClass} pt-1`}>어두움</label>
        <div className="w-[138px] pt-1.5">
          <Slider label="어두움 슬라이더" value={44} className="bg-linear-to-r from-[#151515] to-white" />
        </div>
        <Spinner id="dark" value="45" />
      </div>
      <label className="ml-1 flex h-[35px] items-center gap-[7px] border-t border-[#a5a5a5] pt-0.5 pl-[70px] text-[12px]">
        <input type="checkbox" className="size-[14px] appearance-none border-2 border-t-[#888] border-r-[#e4e4e4] border-b-[#e4e4e4] border-l-[#888] bg-white" />
        음영 처리를 위해 태양 사용
      </label>
    </section>
  )
}

function Tray() {
  return (
    <aside className="w-[302px] shrink-0 bg-[#f3f3f3] pl-[5px]">
      <div className="flex h-[27px] items-center bg-linear-to-b from-[#c5d1df] to-[#dbe6f3] pr-1 pl-1">
        <h2 className="flex-1 text-[15px] leading-5">기본 트레이</h2>
        <button type="button" aria-label="고정" className="mr-[7px] size-3">
          <svg viewBox="0 0 12 12" fill="none" stroke="#111" strokeWidth="1.5">
            <path d="M4 2H8V7M4 2V7M2 7H10M6 7V11M7 2V7" />
          </svg>
        </button>
        <button type="button" aria-label="트레이 닫기" className="flex size-3 items-center justify-center bg-[#c25a60] text-white">
          <X className="size-[9px]" strokeWidth={4} />
        </button>
      </div>
      <div className="flex">
        <div className="min-w-0 flex-1 border-r border-white pt-px">
          <EntityInfo />
          <Materials />
          <div className="mt-[3px] mb-px flex flex-col gap-px border-t-2 border-[#999] pt-0.5">
            <PanelHeader title="구성 요소" />
            <PanelHeader title="스타일" />
          </div>
          <Shadows />
        </div>
        <div className="flex pt-0.5">
          <ScrollBar />
        </div>
      </div>
    </aside>
  )
}

function StatusBar() {
  return (
    <footer className="flex h-[31px] items-center bg-[#f3f3f3] pl-[7px] leading-5">
      <svg viewBox="0 0 18 18" className="mr-[17px] size-[18px]" fill="none">
        <circle cx="9" cy="9" r="8" stroke="#aaa" />
        <path d="M9 4C5 4 6 9 9 14C12 9 13 4 9 4Z" fill="#999" />
      </svg>
      <svg viewBox="0 0 18 18" className="mr-[17px] size-[18px]" fill="none">
        <circle cx="9" cy="9" r="8" stroke="#222" strokeWidth="1.5" />
        <path d="M9 8V14M7 8H9" stroke="#222" strokeWidth="2.5" />
        <circle cx="9" cy="5" r="1.5" fill="#222" />
      </svg>
      <svg viewBox="0 0 18 18" className="size-[18px]" fill="none">
        <circle cx="9" cy="9" r="8" stroke="#999" />
        <circle cx="9" cy="6.5" r="3" fill="#999" />
        <path d="M4 14C4 9 14 9 14 14C12 17 6 17 4 14Z" fill="#999" />
      </svg>
      <div className="mr-2.5 ml-3 h-4 w-px bg-[#999]" />
      <p className="flex-1 pt-0.5 text-[17px]">중심점을 선택하십시오. Ctrl '+' 또는 Ctrl '-'를 사용해 조각 수를 변경합니다.</p>
      <div className="mr-[11px] h-4 w-px bg-[#999]" />
      <label htmlFor="measure" className="mr-[10px] pt-0.5 text-[16px]">측면</label>
      <input id="measure" defaultValue="53" className="mr-[5px] h-7 w-[250px] self-end border border-b-0 border-[#bbb] bg-[#ffffe3] px-0.5 text-[15px] outline-none" />
    </footer>
  )
}

export default function App() {
  return (
    <div className="flex min-h-screen flex-col bg-[#1a1a1a] py-[26px] font-['Open_Sans','Noto_Sans_CJK_KR',sans-serif] text-[#1e1e1e]">
      <TitleBar />
      <MenuBar />
      <TopToolbar />
      <div className="flex flex-1">
        <LeftToolbar />
        <Viewport />
        <Tray />
      </div>
      <StatusBar />
    </div>
  )
}
